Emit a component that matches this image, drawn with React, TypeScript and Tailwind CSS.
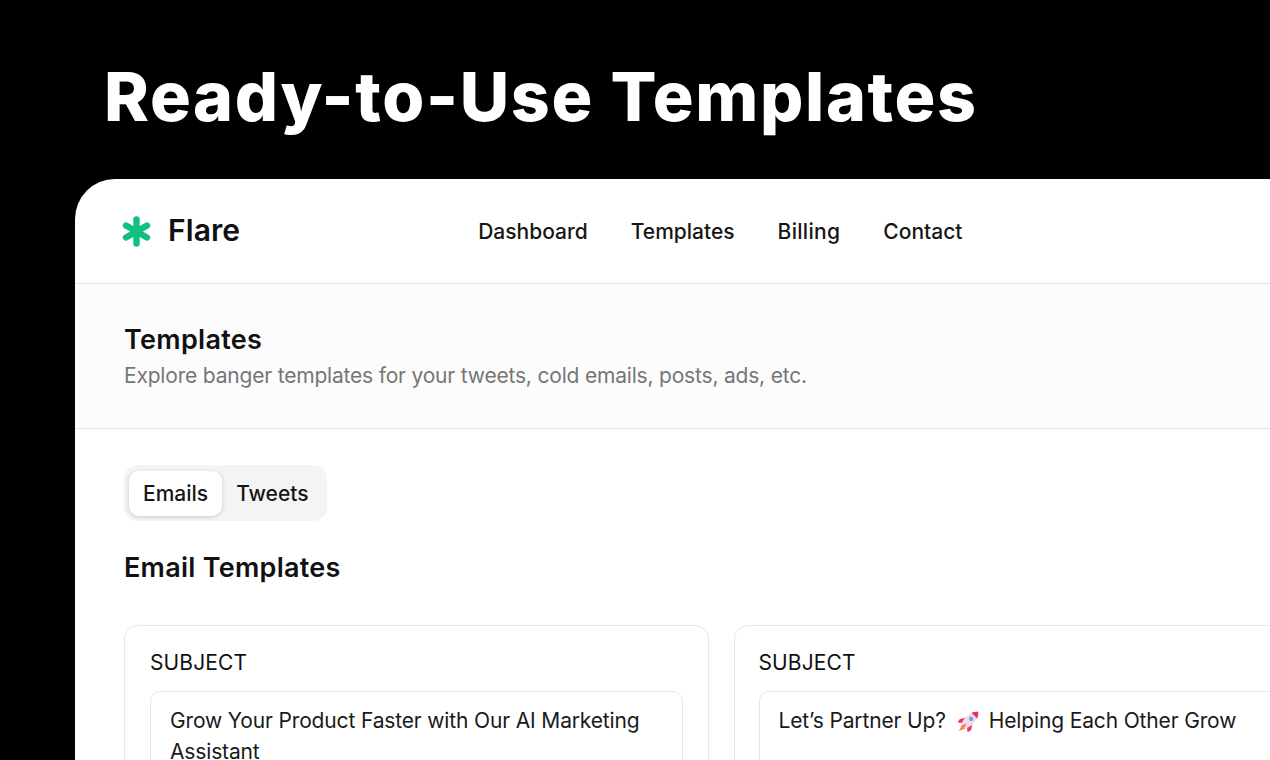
import React from 'react';

const font = { fontFamily: 'Inter, sans-serif' };

function Asterisk() {
  return (
    <svg width="30" height="31" viewBox="0 0 30 31" fill="none">
      <g stroke="#0fc07f" strokeWidth="6.4" strokeLinecap="round">
        <path d="M14.5 3.5V27.5" />
        <path d="M4 9.5L25 21.5" />
        <path d="M25 9.5L4 21.5" />
      </g>
    </svg>
  );
}

function Rocket() {
  return (
    <svg width="24" height="24" viewBox="0 0 24 24" className="mr-[8px] ml-[11px] inline-block align-[-5px]">
      <g transform="rotate(45 12 12)">
        <path d="M9.5 20h5l-2.5 6z" fill="#f58a2a" />
        <path d="M8 11l-4 6 1 4 4-3z" fill="#ea3a6c" />
        <path d="M16 11l4 6-1 4-4-3z" fill="#ea3a6c" />
        <path d="M12 -1C15.5 2 17.5 7 17 12c-.3 3-1 6-2 8H9c-1-2-1.7-5-2-8C6.500 7 8.500 2 12 -1z" fill="#f0dde6" />
        <path d="M12 -1C13.800 .5 15.300 2.500 16 4.500H8C8.700 2.500 10.200 .5 12 -1z" fill="#ee2f64" />
        <path d="M12 16l1.200 4h-2.400z" fill="#ea3a6c" />
        <circle cx="12" cy="9" r="2.200" fill="#6aa6e8" />
      </g>
    </svg>
  );
}

function SubjectCard({ children, cardClass }: { children: React.ReactNode; cardClass: string }) {
  return (
    <div className={`${cardClass} h-[200px] shrink-0 rounded-[14px] border border-[#e8e8e8] bg-white pt-[22px]`}>
      <div className="text-[21px] leading-[30px] tracking-[0.1px] text-[#111]">SUBJECT</div>
      <div className="mt-[13px] h-[120px] rounded-[10px] border border-[#e8e8e8] px-[19px] pt-[13px] text-[21px] leading-[31px] tracking-[-0.15px] text-[#1a1a1a]">
        {children}
      </div>
    </div>
  );
}

export default function App() {
  return (
    <div className="h-[760px] w-[1270px] overflow-hidden bg-black" style={font}>
      <h1 className="h-[179px] pl-[104px] pt-[54px] text-[68px] leading-[84px] font-extrabold tracking-[1.65px] text-white">
        Ready-to-Use Templates
      </h1>
      <div className="ml-[75px] h-[581px] overflow-hidden rounded-tl-[40px] bg-white">
        <header className="flex h-[105px] items-center border-b border-[#e2e2e2] pl-[47px]">
          <Asterisk />
          <span className="ml-[16px] pb-[2px] text-[30px] font-semibold tracking-[0.1px] text-[#111]">Flare</span>
          <nav className="ml-[238px] flex gap-[43px] pt-[1px] text-[21px] font-medium text-[#161616]">
            <span>Dashboard</span>
            <span>Templates</span>
            <span className="tracking-[0.3px]">Billing</span>
            <span>Contact</span>
          </nav>
        </header>
        <section className="h-[145px] border-b border-[#e2e2e2] bg-[#fcfcfc] pl-[49px] pt-[37px]">
          <h2 className="text-[27px] leading-[38px] font-semibold tracking-[0.3px] text-[#111]">Templates</h2>
          <p className="text-[21px] leading-[33px] tracking-[-0.19px] text-[#767676]">Explore banger templates for your tweets, cold emails, posts, ads, etc.</p>
        </section>
        <div className="pl-[49px] pt-[36px]">
          <div className="flex h-[56px] w-[203px] items-center gap-[4px] rounded-[14px] bg-[#f4f4f4] px-[5px]">
            <div className="flex h-[45px] items-center rounded-[10px] bg-white px-[14px] pt-[2px] text-[21px] font-medium text-[#161616] shadow-[0_1px_4px_rgba(0,0,0,0.18)]">Emails</div>
            <div className="px-[10px] pt-[2px] text-[21px] font-medium text-[#161616]">Tweets</div>
          </div>
          <h3 className="mt-[28px] text-[27px] leading-[38px] font-semibold tracking-[0.27px] text-[#111]">Email Templates</h3>
          <div className="mt-[38px] flex gap-[25px]">
            <SubjectCard cardClass="w-[584.5px] px-[25px]">Grow Your Product Faster with Our AI Marketing Assistant</SubjectCard>
            <SubjectCard cardClass="w-[585px] pl-[24px]">
              Let’s Partner Up?
              <Rocket />
              Helping Each Other Grow
            </SubjectCard>
          </div>
        </div>
      </div>
    </div>
  );
}
